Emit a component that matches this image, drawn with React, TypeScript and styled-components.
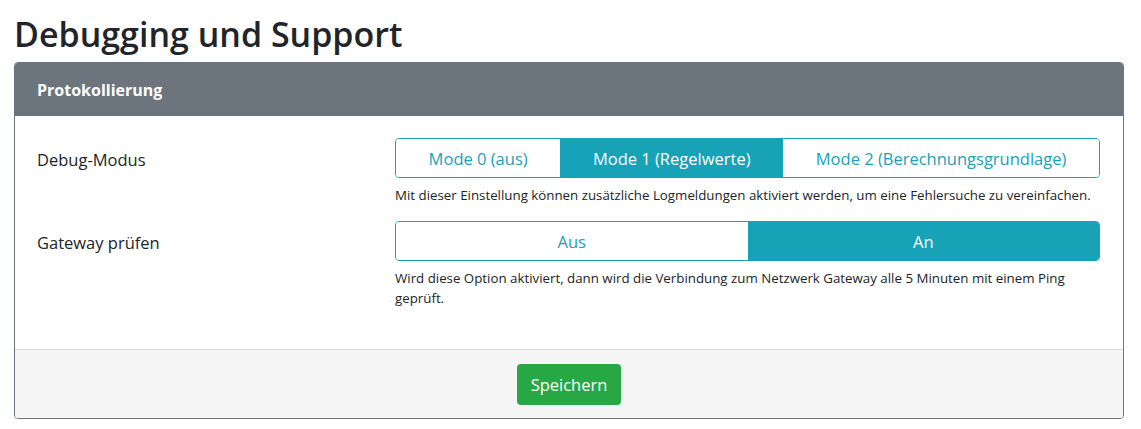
import React, { useState } from "react";
import styled, { createGlobalStyle } from "styled-components";

const GlobalStyle = createGlobalStyle`
  body {
    margin: 0;
    background: #ffffff;
    font-family: "Open Sans", "Noto Sans", "Liberation Sans", sans-serif;
    color: #212529;
  }
`;

const Page = styled.div`
  padding: 15px 0 0 14px;
  width: 1110px;
`;

const Title = styled.h2`
  margin: 0 0 8px 0;
  font-size: 34px;
  font-weight: 600;
  line-height: 39px;
  color: #212529;
`;

const Card = styled.section`
  border: 1px solid #6c757d;
  border-radius: 4px;
  overflow: hidden;
`;

const CardHeader = styled.header`
  background: #6c757d;
  color: #ffffff;
  font-weight: 700;
  font-size: 16px;
  height: 53px;
  display: flex;
  align-items: center;
  padding: 0 22px;
`;

const CardBody = styled.div`
  padding: 22px 22px 41px 22px;
  display: flex;
  flex-direction: column;
  gap: 16px;
`;

const Row = styled.div`
  display: grid;
  grid-template-columns: 358px 1fr;
`;

const Label = styled.div`
  font-size: 16.5px;
  line-height: 40px;
  padding-top: 2px;
`;

const Control = styled.div`
  display: flex;
  flex-direction: column;
  width: 705px;
`;

const Group = styled.div`
  display: flex;
  height: 40px;
  border: 1px solid #17a2b8;
  border-radius: 4px;
  overflow: hidden;
  box-sizing: border-box;
`;

const SegButton = styled.button<{ $active: boolean; $equal?: boolean }>`
  flex: ${(p) => (p.$equal ? "1 1 0" : "1 1 auto")};
  border: none;
  margin: 0;
  padding: 0 16px;
  font-family: inherit;
  font-size: 16.5px;
  cursor: pointer;
  background: ${(p) => (p.$active ? "#17a2b8" : "#ffffff")};
  color: ${(p) => (p.$active ? "#ffffff" : "#17a2b8")};
`;

const Help = styled.p`
  margin: 7px 0 0 0;
  font-size: 13.3px;
  line-height: 20px;
  color: #212529;
`;

const CardFooter = styled.footer`
  background: #f5f5f5;
  border-top: 1px solid #dcdcdc;
  padding: 14px 0 13px;
  display: flex;
  justify-content: center;
`;

const SaveButton = styled.button`
  background: #28a745;
  color: #ffffff;
  border: none;
  border-radius: 4px;
  height: 41px;
  padding: 0 14px;
  font-family: inherit;
  font-size: 16.5px;
  cursor: pointer;
`;

export default function App() {
  const [mode, setMode] = useState(1);
  const [gateway, setGateway] = useState(true);
  const modes = ["Mode 0 (aus)", "Mode 1 (Regelwerte)", "Mode 2 (Berechnungsgrundlage)"];
  return (
    <>
      <GlobalStyle />
      <Page>
        <Title>Debugging und Support</Title>
        <Card>
          <CardHeader>Protokollierung</CardHeader>
          <CardBody>
            <Row>
              <Label>Debug-Modus</Label>
              <Control>
                <Group>
                  {modes.map((m, i) => (
                    <SegButton key={m} $active={mode === i} onClick={() => setMode(i)}>
                      {m}
                    </SegButton>
                  ))}
                </Group>
                <Help>
                  Mit dieser Einstellung können zusätzliche Logmeldungen aktiviert werden, um eine Fehlersuche zu vereinfachen.
                </Help>
              </Control>
            </Row>
            <Row>
              <Label>Gateway prüfen</Label>
              <Control>
                <Group>
                  <SegButton $equal $active={!gateway} onClick={() => setGateway(false)}>
                    Aus
                  </SegButton>
                  <SegButton $equal $active={gateway} onClick={() => setGateway(true)}>
                    An
                  </SegButton>
                </Group>
                <Help>
                  Wird diese Option aktiviert, dann wird die Verbindung zum Netzwerk Gateway alle 5 Minuten mit einem Ping
                  geprüft.
                </Help>
              </Control>
            </Row>
          </CardBody>
          <CardFooter>
            <SaveButton>Speichern</SaveButton>
          </CardFooter>
        </Card>
      </Page>
    </>
  );
}
